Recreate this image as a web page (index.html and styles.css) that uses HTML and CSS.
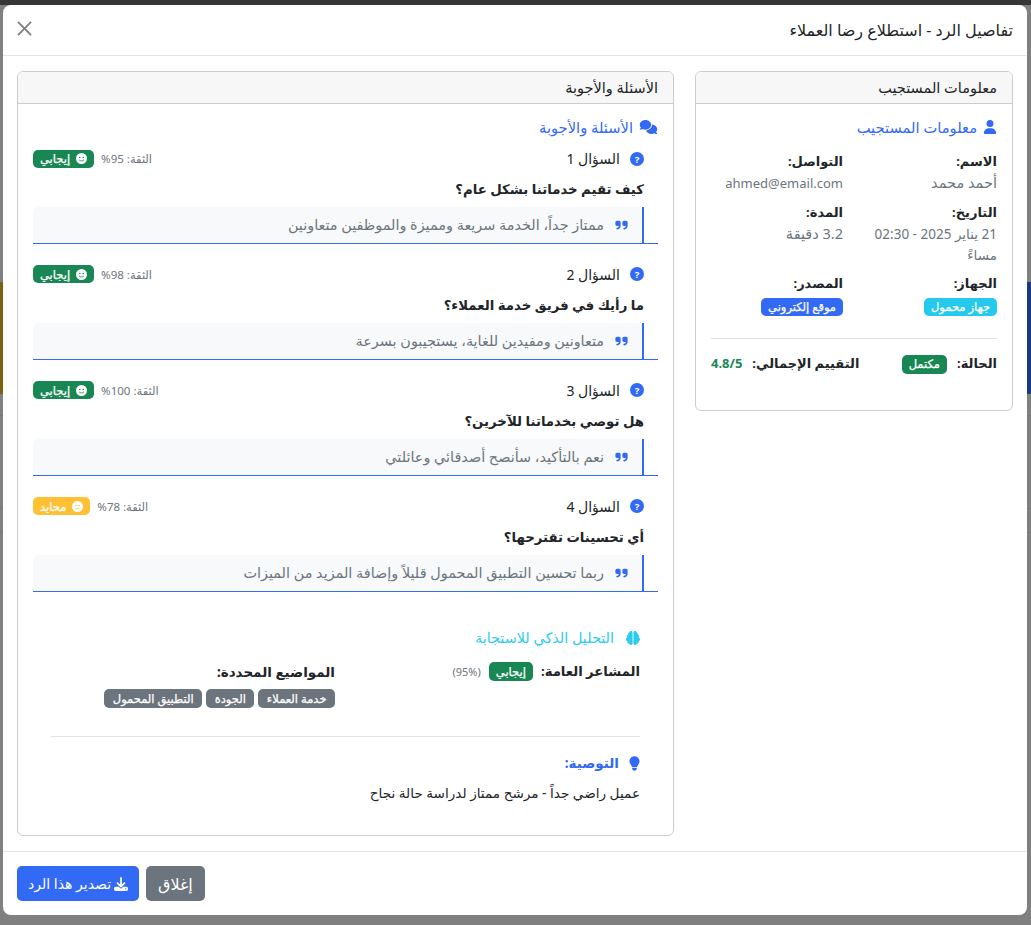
FILE: index.html
```html
<!DOCTYPE html>
<html lang="ar" dir="rtl">
<head>
    <meta charset="UTF-8">
    <title>تفاصيل الرد</title>
    <link rel="stylesheet" href="styles.css">
</head>
<body>
    <div class="backdrop">
        <div class="band-top"></div>
        <div class="band-gold"></div>
        <div class="band-blue"></div>
        <div class="line line-1"></div>
        <div class="line line-2"></div>
        <div class="line line-3"></div>
    </div>

    <div class="modal">
        <div class="modal-header">
            <h5 class="modal-title">تفاصيل الرد - استطلاع رضا العملاء</h5>
            <svg class="btn-close" viewBox="0 0 16 16"><path d="M1 1l14 14M15 1L1 15" stroke="#000" stroke-width="1.9" fill="none"/></svg>
        </div>

        <div class="modal-body">
            <div class="col-side">
                <div class="card">
                    <div class="card-header">معلومات المستجيب</div>
                    <div class="card-body">
                        <h6 class="section-title text-primary">
                            <svg class="icon" viewBox="0 0 448 512"><path fill="currentColor" d="M224 256a128 128 0 1 0 0-256 128 128 0 1 0 0 256zm-45.7 48C79.8 304 0 383.800 0 482.300 0 498.700 13.300 512 29.700 512h388.600c16.400 0 29.700-13.300 29.700-29.700C448 383.800 368.200 304 269.700 304h-91.400z"/></svg>
                            معلومات المستجيب
                        </h6>
                        <div class="info-grid">
                            <div class="info-item">
                                <strong>الاسم:</strong>
                                <span class="muted muted-lg">أحمد محمد</span>
                            </div>
                            <div class="info-item">
                                <strong>التواصل:</strong>
                                <span class="muted muted-en">ahmed@email.com</span>
                            </div>
                            <div class="info-item">
                                <strong>التاريخ:</strong>
                                <span class="muted">21 يناير 2025 - 02:30 مساءً</span>
                            </div>
                            <div class="info-item">
                                <strong>المدة:</strong>
                                <span class="muted muted-lg">3.2 دقيقة</span>
                            </div>
                            <div class="info-item">
                                <strong>الجهاز:</strong>
                                <div class="badge-line"><span class="badge bg-info">جهاز محمول</span></div>
                            </div>
                            <div class="info-item">
                                <strong>المصدر:</strong>
                                <div class="badge-line"><span class="badge bg-primary">موقع إلكتروني</span></div>
                            </div>
                        </div>
                        <hr class="divider divider-side">
                        <div class="status-row">
                            <div class="status-item">
                                <strong>الحالة:</strong>
                                <span class="badge bg-success">مكتمل</span>
                            </div>
                            <div class="status-item">
                                <strong>التقييم الإجمالي:</strong>
                                <strong class="score text-success">4.8/5</strong>
                            </div>
                        </div>
                    </div>
                </div>
            </div>

            <div class="col-main">
                <div class="card">
                    <div class="card-header">الأسئلة والأجوبة</div>
                    <div class="card-body">
                        <h6 class="section-title text-primary">
                            <svg class="icon icon-comments" viewBox="0 0 640 512"><path fill="currentColor" d="M208 352c114.900 0 208-78.800 208-176S322.900 0 208 0 0 78.800 0 176c0 38.600 14.700 74.300 39.600 103.400-3.500 9.400-8.700 17.700-14.200 24.700-4.800 6.200-9.700 11-13.300 14.300-1.800 1.600-3.300 2.900-4.300 3.700-.5.400-.9.700-1.100.800l-.2.200C1 327.200-1.400 334.400.8 340.900S9.100 352 16 352c21.800 0 43.800-5.600 62.100-12.500 9.200-3.500 17.800-7.400 25.200-11.400C134.100 343.300 169.800 352 208 352zm240-176c0 112.300-99.100 196.900-216.500 207 24.300 74.400 104.900 129 200.500 129 38.200 0 73.900-8.700 104.700-23.900 7.500 4 16 7.900 25.200 11.400 18.300 6.900 40.300 12.500 62.100 12.500 6.900 0 13.100-4.500 15.200-11.100 2.100-6.600-.2-13.800-5.800-17.900l-.2-.2c-.2-.2-.6-.4-1.100-.8-1-.8-2.500-2-4.300-3.700-3.600-3.300-8.500-8.100-13.300-14.300-5.500-7-10.700-15.400-14.200-24.700 24.900-29 39.600-64.700 39.600-103.400 0-92.800-84.900-168.900-192.600-175.500.4 5.100.6 10.300.6 15.500z"/></svg>
                            الأسئلة والأجوبة
                        </h6>

                        <div class="qa-item">
                            <div class="qa-top">
                                <span class="qa-label"><svg class="icon-q" viewBox="0 0 16 16"><circle cx="8" cy="8" r="8" fill="currentColor"/><text x="8" y="12" text-anchor="middle" class="q-mark">?</text></svg>السؤال 1</span>
                                <span class="qa-sent"><span class="confidence">الثقة: 95%</span><span class="badge bg-success"><svg class="icon-face" viewBox="0 0 16 16"><circle cx="8" cy="8" r="8" fill="#fff"/><circle cx="5.500" cy="6.500" r="1.200" fill="#198754"/><circle cx="10.500" cy="6.500" r="1.200" fill="#198754"/><path d="M4.500 10c1.800 2 5.200 2 7 0" stroke="#198754" stroke-width="1.200" fill="none"/></svg>إيجابي</span></span>
                            </div>
                            <p class="question">كيف تقيم خدماتنا بشكل عام؟</p>
                            <div class="answer-wrap"><div class="answer"><svg class="quote" viewBox="0 0 448 512"><path fill="currentColor" d="M448 296c0 66.300-53.700 120-120 120h-8c-17.700 0-32-14.300-32-32s14.300-32 32-32h8c30.900 0 56-25.100 56-56v-8H320c-35.300 0-64-28.700-64-64V160c0-35.300 28.700-64 64-64h64c35.300 0 64 28.700 64 64v136zm-256 0c0 66.300-53.700 120-120 120H64c-17.700 0-32-14.300-32-32s14.300-32 32-32h8c30.900 0 56-25.100 56-56v-8H64c-35.300 0-64-28.700-64-64V160c0-35.300 28.700-64 64-64h64c35.300 0 64 28.700 64 64v136z"/></svg>ممتاز جداً، الخدمة سريعة ومميزة والموظفين متعاونين</div></div>
                        </div>

                        <div class="qa-item">
                            <div class="qa-top">
                                <span class="qa-label"><svg class="icon-q" viewBox="0 0 16 16"><circle cx="8" cy="8" r="8" fill="currentColor"/><text x="8" y="12" text-anchor="middle" class="q-mark">?</text></svg>السؤال 2</span>
                                <span class="qa-sent"><span class="confidence">الثقة: 98%</span><span class="badge bg-success"><svg class="icon-face" viewBox="0 0 16 16"><circle cx="8" cy="8" r="8" fill="#fff"/><circle cx="5.500" cy="6.500" r="1.200" fill="#198754"/><circle cx="10.500" cy="6.500" r="1.200" fill="#198754"/><path d="M4.500 10c1.800 2 5.200 2 7 0" stroke="#198754" stroke-width="1.200" fill="none"/></svg>إيجابي</span></span>
                            </div>
                            <p class="question">ما رأيك في فريق خدمة العملاء؟</p>
                            <div class="answer-wrap"><div class="answer"><svg class="quote" viewBox="0 0 448 512"><path fill="currentColor" d="M448 296c0 66.300-53.700 120-120 120h-8c-17.700 0-32-14.300-32-32s14.300-32 32-32h8c30.900 0 56-25.100 56-56v-8H320c-35.300 0-64-28.700-64-64V160c0-35.300 28.700-64 64-64h64c35.300 0 64 28.700 64 64v136zm-256 0c0 66.300-53.700 120-120 120H64c-17.700 0-32-14.300-32-32s14.300-32 32-32h8c30.900 0 56-25.100 56-56v-8H64c-35.300 0-64-28.700-64-64V160c0-35.300 28.700-64 64-64h64c35.300 0 64 28.700 64 64v136z"/></svg>متعاونين ومفيدين للغاية، يستجيبون بسرعة</div></div>
                        </div>

                        <div class="qa-item">
                            <div class="qa-top">
                                <span class="qa-label"><svg class="icon-q" viewBox="0 0 16 16"><circle cx="8" cy="8" r="8" fill="currentColor"/><text x="8" y="12" text-anchor="middle" class="q-mark">?</text></svg>السؤال 3</span>
                                <span class="qa-sent"><span class="confidence">الثقة: 100%</span><span class="badge bg-success"><svg class="icon-face" viewBox="0 0 16 16"><circle cx="8" cy="8" r="8" fill="#fff"/><circle cx="5.500" cy="6.500" r="1.200" fill="#198754"/><circle cx="10.500" cy="6.500" r="1.200" fill="#198754"/><path d="M4.500 10c1.800 2 5.200 2 7 0" stroke="#198754" stroke-width="1.200" fill="none"/></svg>إيجابي</span></span>
                            </div>
                            <p class="question">هل توصي بخدماتنا للآخرين؟</p>
                            <div class="answer-wrap"><div class="answer"><svg class="quote" viewBox="0 0 448 512"><path fill="currentColor" d="M448 296c0 66.300-53.700 120-120 120h-8c-17.700 0-32-14.300-32-32s14.300-32 32-32h8c30.900 0 56-25.100 56-56v-8H320c-35.300 0-64-28.700-64-64V160c0-35.300 28.700-64 64-64h64c35.300 0 64 28.700 64 64v136zm-256 0c0 66.300-53.700 120-120 120H64c-17.700 0-32-14.300-32-32s14.300-32 32-32h8c30.900 0 56-25.100 56-56v-8H64c-35.300 0-64-28.700-64-64V160c0-35.300 28.700-64 64-64h64c35.300 0 64 28.700 64 64v136z"/></svg>نعم بالتأكيد، سأنصح أصدقائي وعائلتي</div></div>
                        </div>

                        <div class="qa-item">
                            <div class="qa-top">
                                <span class="qa-label"><svg class="icon-q" viewBox="0 0 16 16"><circle cx="8" cy="8" r="8" fill="currentColor"/><text x="8" y="12" text-anchor="middle" class="q-mark">?</text></svg>السؤال 4</span>
                                <span class="qa-sent"><span class="confidence">الثقة: 78%</span><span class="badge bg-warning"><svg class="icon-face" viewBox="0 0 16 16"><circle cx="8" cy="8" r="8" fill="#fff"/><circle cx="5.500" cy="6.500" r="1.200" fill="#ffc034"/><circle cx="10.500" cy="6.500" r="1.200" fill="#ffc034"/><path d="M5 11h6" stroke="#ffc034" stroke-width="1.200"/></svg>محايد</span></span>
                            </div>
                            <p class="question">أي تحسينات تقترحها؟</p>
                            <div class="answer-wrap"><div class="answer"><svg class="quote" viewBox="0 0 448 512"><path fill="currentColor" d="M448 296c0 66.300-53.700 120-120 120h-8c-17.700 0-32-14.300-32-32s14.300-32 32-32h8c30.900 0 56-25.100 56-56v-8H320c-35.300 0-64-28.700-64-64V160c0-35.300 28.700-64 64-64h64c35.300 0 64 28.700 64 64v136zm-256 0c0 66.300-53.700 120-120 120H64c-17.700 0-32-14.300-32-32s14.300-32 32-32h8c30.900 0 56-25.100 56-56v-8H64c-35.300 0-64-28.700-64-64V160c0-35.300 28.700-64 64-64h64c35.300 0 64 28.700 64 64v136z"/></svg>ربما تحسين التطبيق المحمول قليلاً وإضافة المزيد من الميزات</div></div>
                        </div>

                        <div class="analysis">
                            <h6 class="section-title text-info">
                                <svg class="icon icon-brain" viewBox="0 0 512 512"><path fill="currentColor" d="M184 0c30.900 0 56 25.100 56 56V456c0 30.900-25.100 56-56 56-28.900 0-52.700-21.900-55.700-50.100-5.200 1.400-10.700 2.100-16.300 2.100-35.300 0-64-28.700-64-64 0-7.400 1.300-14.600 3.600-21.200C21.400 367.400 0 338.200 0 304c0-31.900 18.700-59.500 45.800-72.300C37.100 220.800 32 207 32 192c0-30.700 21.600-56.300 50.400-62.600C80.800 123.900 80 118 80 112c0-29.900 20.600-55.100 48.300-62.100C131.300 21.900 155.100 0 184 0zM328 0c28.900 0 52.600 21.900 55.700 49.900 27.800 7 48.300 32.100 48.300 62.100 0 6-.8 11.900-2.400 17.400 28.800 6.200 50.400 31.900 50.400 62.600 0 15-5.100 28.800-13.800 39.700C493.300 244.500 512 272.100 512 304c0 34.200-21.400 63.400-51.600 74.800 2.300 6.600 3.600 13.800 3.600 21.200 0 35.300-28.700 64-64 64-5.600 0-11.100-.7-16.300-2.100-3 28.200-26.800 50.100-55.700 50.100-30.900 0-56-25.100-56-56V56c0-30.900 25.100-56 56-56z"/></svg>
                                التحليل الذكي للاستجابة
                            </h6>
                            <div class="analysis-row">
                                <div class="analysis-col col-mood">
                                    <strong>المشاعر العامة:</strong>
                                    <span class="badge bg-success">إيجابي</span>
                                    <small class="percent">(95%)</small>
                                </div>
                                <div class="analysis-col">
                                    <strong>المواضيع المحددة:</strong>
                                    <div class="tags">
                                        <span class="badge bg-secondary">خدمة العملاء</span>
                                        <span class="badge bg-secondary">الجودة</span>
                                        <span class="badge bg-secondary">التطبيق المحمول</span>
                                    </div>
                                </div>
                            </div>
                            <hr class="divider">
                            <div class="recommend-title text-primary">
                                <svg class="icon-bulb" viewBox="0 0 384 512"><path fill="currentColor" d="M272 384c9.600-31.900 29.500-59.100 49.200-86.200 5.200-7.100 10.400-14.200 15.400-21.400 19.800-28.500 31.400-63 31.400-100.300C368 78.800 289.200 0 192 0S16 78.800 16 176c0 37.300 11.600 71.900 31.400 100.300 5 7.200 10.200 14.300 15.400 21.400 19.800 27.100 39.700 54.400 49.200 86.300h160zM192 512c44.200 0 80-35.800 80-80v-16H112v16c0 44.200 35.800 80 80 80z"/></svg>
                                <strong>التوصية:</strong>
                            </div>
                            <p class="recommend-text">عميل راضي جداً - مرشح ممتاز لدراسة حالة نجاح</p>
                        </div>
                    </div>
                </div>
            </div>
        </div>

        <div class="modal-footer">
            <button class="btn btn-secondary">إغلاق</button>
            <button class="btn btn-primary"><svg class="icon-download" viewBox="0 0 512 512"><path fill="currentColor" d="M288 32c0-17.700-14.300-32-32-32s-32 14.300-32 32v242.700l-73.400-73.400c-12.500-12.500-32.800-12.500-45.300 0s-12.500 32.800 0 45.300l128 128c12.500 12.500 32.800 12.500 45.300 0l128-128c12.500-12.500 12.500-32.800 0-45.300s-32.800-12.500-45.300 0L288 274.700V32zM64 352c-35.300 0-64 28.700-64 64v32c0 35.300 28.700 64 64 64h384c35.300 0 64-28.700 64-64v-32c0-35.300-28.700-64-64-64H346.500l-45.300 45.300c-25 25-65.500 25-90.500 0L165.500 352H64zm368 56a24 24 0 1 1 0 48 24 24 0 1 1 0-48z"/></svg>تصدير هذا الرد</button>
        </div>
    </div>
</body>
</html>
```

FILE: styles.css
```css
* {
    box-sizing: border-box;
}
html, body {
    height: 100%;
}
body {
    margin: 0;
    background: #808080;
    font-family: "Noto Sans", "DejaVu Sans", sans-serif;
    font-size: 14px;
    line-height: 1.5;
    color: #212529;
    overflow: hidden;
}
.backdrop {
    position: absolute;
    inset: 0;
}
.band-top {
    position: absolute;
    top: 0;
    left: 0;
    right: 0;
    height: 5px;
    background: #363636;
}
.band-gold {
    position: absolute;
    left: 0;
    width: 3px;
    top: 282px;
    height: 112px;
    background: #7f6010;
}
.band-blue {
    position: absolute;
    right: 0;
    width: 4px;
    top: 282px;
    height: 112px;
    background: #1a3a80;
}
.line {
    position: absolute;
    left: 0;
    right: 0;
    height: 1px;
    background: #777;
}
.line-1 {
    top: 415px;
}
.line-2 {
    top: 508px;
}
.line-3 {
    top: 532px;
}
.modal {
    position: relative;
    margin: 5px 4px 0 3px;
    height: 910px;
    background: #fff;
    border-radius: 8px;
    display: flex;
    flex-direction: column;
    overflow: hidden;
}
.modal-header {
    height: 51px;
    flex-shrink: 0;
    display: flex;
    justify-content: space-between;
    align-items: center;
    padding: 0 14px;
    border-bottom: 1px solid #dee2e6;
}
.modal-title {
    margin: 0;
    font-size: 16px;
    font-weight: 400;
}
.btn-close {
    width: 15px;
    height: 15px;
    opacity: 0.5;
    margin-top: -3px;
}
.modal-body {
    flex: 1;
    min-height: 0;
    display: flex;
    gap: 21px;
    padding: 15px 14px 14px;
    align-items: flex-start;
}
.col-side {
    width: 318px;
    flex-shrink: 0;
}
.col-main {
    flex: 1;
}
.card {
    border: 1px solid #ccc;
    border-radius: 6px;
    overflow: hidden;
    background: #fff;
}
.card-header {
    height: 32px;
    padding: 0 15px;
    display: flex;
    align-items: center;
    background: #f7f7f7;
    border-bottom: 1px solid #ccc;
    font-size: 14.500px;
}
.card-body {
    padding: 12px 15px 16px;
}
.section-title {
    margin: 0 0 10px;
    font-size: 14.700px;
    font-weight: 400;
    display: flex;
    align-items: center;
    gap: 4px;
}
.text-primary {
    color: #3269f5;
}
.text-info {
    color: #2ccbf0;
}
.text-success {
    color: #198754;
}
.icon {
    width: 14px;
    height: 14px;
    margin-left: 2px;
}
.icon-comments {
    width: 19px;
}
.icon-brain {
    margin-left: 8px;
}
.info-grid {
    display: grid;
    grid-template-columns: 1fr 1fr;
    gap: 8px 22px;
    padding-top: 3px;
}
.info-item strong {
    display: block;
    font-size: 13px;
    line-height: 21px;
}
.muted {
    color: #6c757d;
    font-size: 13.500px;
}
.muted-lg {
    font-size: 14.500px;
}
.muted-en {
    font-size: 13px;
}
.badge-line {
    padding-top: 1px;
}
.badge {
    display: inline-flex;
    align-items: center;
    gap: 6px;
    font-size: 11.500px;
    color: #fff;
    -webkit-text-stroke: 0.25px #fff;
    padding: 0 7px;
    height: 18px;
    border-radius: 5px;
}
.bg-info {
    background: #26c9ee;
}
.bg-primary {
    background: #3269f5;
}
.bg-success {
    background: #198754;
}
.bg-warning {
    background: #ffc034;
}
.bg-secondary {
    background: #6c757d;
}
.divider {
    border: 0;
    border-top: 1px solid #dee2e6;
    margin: 16px 0;
}
.divider-side {
    margin: 22px 0 15px;
}
.status-row {
    display: flex;
    justify-content: space-between;
    padding-bottom: 20px;
}
.status-item {
    display: flex;
    align-items: center;
    gap: 10px;
}
.status-item strong {
    font-size: 13px;
}
.status-item .badge {
    height: 19px;
}
.qa-item {
    margin-bottom: 19.900px;
}
.qa-top {
    display: flex;
    justify-content: space-between;
    align-items: center;
    padding-right: 14px;
}
.qa-label {
    display: flex;
    align-items: center;
    gap: 10px;
}
.icon-q {
    width: 14px;
    height: 14px;
    color: #3269f5;
}
.q-mark {
    font-size: 11px;
    font-weight: 700;
    fill: #fff;
}
.qa-sent {
    display: flex;
    align-items: center;
    gap: 7px;
}
.confidence {
    font-size: 11.500px;
    color: #6c757d;
}
.icon-face {
    width: 11px;
    height: 11px;
}
.question {
    margin: 10px 14px 7px;
    font-size: 13.300px;
    line-height: 21px;
    font-weight: 700;
}
.answer-wrap {
    border-bottom: 1px solid #3269f5;
}
.answer {
    height: 36px;
    margin-right: 14px;
    background: #f8f9fa;
    border-right: 2px solid #3269f5;
    border-radius: 5px 0 0 0;
    color: #6c757d;
    font-size: 14.400px;
    display: flex;
    align-items: center;
    padding-right: 14px;
}
.quote {
    width: 13px;
    height: 14px;
    color: #3269f5;
    margin-left: 11px;
}
.analysis {
    padding: 0 18px;
    margin-top: 35.100px;
}
.analysis .section-title {
    font-size: 14.400px;
}
.analysis-row {
    display: flex;
    margin-top: 13px;
    padding-bottom: 12px;
}
.analysis-col strong {
    font-size: 13.500px;
    line-height: 21px;
}
.col-mood {
    width: 305px;
    flex-shrink: 0;
    display: flex;
    align-items: center;
    align-self: flex-start;
    gap: 8px;
}
.col-mood strong {
    font-size: 13.200px;
}
.analysis .badge {
    height: 19px;
}
.percent {
    font-size: 11px;
    color: #6c757d;
}
.tags {
    display: flex;
    gap: 4px;
    margin-top: 6px;
}
.tags .badge {
    padding: 0 8.500px;
}
.recommend-title {
    display: flex;
    align-items: center;
    gap: 10px;
}
.recommend-title strong {
    font-size: 13.500px;
}
.icon-bulb {
    width: 11px;
    height: 15px;
}
.recommend-text {
    margin: 9px 0 16px;
    font-size: 13.600px;
}
.modal-footer {
    height: 64px;
    flex-shrink: 0;
    border-top: 1px solid #dee2e6;
    display: flex;
    justify-content: flex-end;
    align-items: center;
    gap: 7px;
    padding: 0 14px;
}
.btn {
    height: 35px;
    border: 0;
    border-radius: 5px;
    color: #fff;
    font-family: inherit;
    font-size: 14px;
    padding: 0 12px;
    display: flex;
    align-items: center;
    gap: 3px;
}
.btn-secondary {
    background: #6c757d;
    font-size: 16px;
}
.btn-primary {
    background: #3269f5;
    padding: 0 11px;
}
.icon-download {
    width: 14px;
    height: 14px;
}
```
